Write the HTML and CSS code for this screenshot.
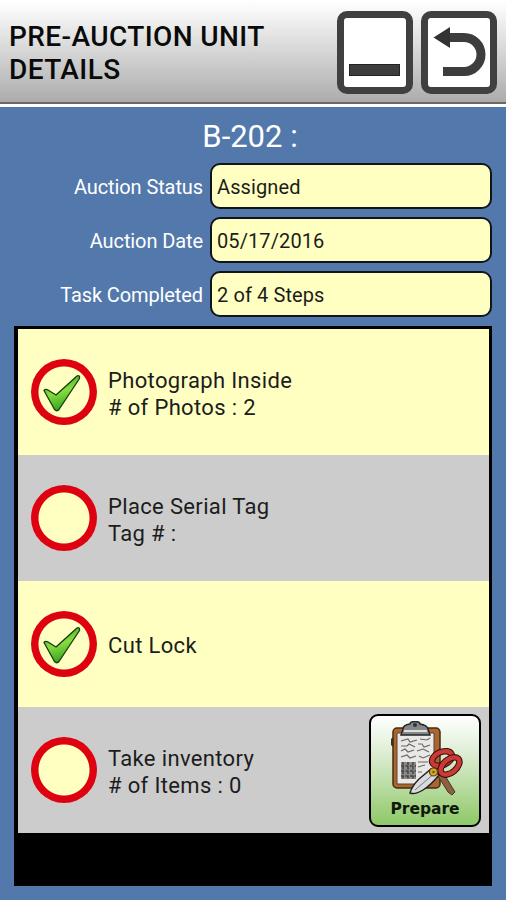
FILE: index.html
```html
<!DOCTYPE html>
<html lang="en">
<head>
    <meta charset="UTF-8">
    <meta name="viewport" content="width=device-width, initial-scale=1.0">
    <title>Pre-Auction Unit Details</title>
    <link rel="stylesheet" href="styles.css">
</head>
<body>
    <!-- Check mark shared by the completed steps -->
    <svg class="defs" width="0" height="0" aria-hidden="true">
        <defs>
            <linearGradient id="check-fill" x1="0" y1="0" x2="0.3" y2="1">
                <stop offset="0" stop-color="#3c9a22"/>
                <stop offset="0.55" stop-color="#86dc40"/>
                <stop offset="1" stop-color="#3aa51f"/>
            </linearGradient>
            <symbol id="check" viewBox="0 0 66 66">
                <path d="M13 31.500Q14.500 29.500 17 31L25 36L46 17Q49 15.500 48.500 19.500L28 50.500Q26 53 23.500 50.500Z" fill="url(#check-fill)" stroke="#123c0c" stroke-width="1.300" stroke-linejoin="round"/>
            </symbol>
        </defs>
    </svg>

    <header class="header">
        <h1>PRE-AUCTION UNIT DETAILS</h1>
        <div class="header-buttons">
            <button class="icon-btn" aria-label="Minimize">
                <svg width="62" height="70" viewBox="0 0 62 70">
                    <rect x="5.500" y="46.500" width="50" height="11" fill="#3d3d3d" stroke="#222" stroke-width="1"/>
                </svg>
            </button>
            <button class="icon-btn" aria-label="Back">
                <svg width="62" height="70" viewBox="0 0 62 70">
                    <path d="M20 19.500H36A17 17 0 0 1 36 53.500H15" fill="none" stroke="#3d3d3d" stroke-width="9"/>
                    <path d="M5.500 19.500L22 9V30Z" fill="#333"/>
                </svg>
            </button>
        </div>
    </header>

    <main class="content">
        <h2>B-202 :</h2>

        <div class="fields">
            <span class="label">Auction Status</span>
            <div class="value">Assigned</div>
            <span class="label">Auction Date</span>
            <div class="value">05/17/2016</div>
            <span class="label">Task Completed</span>
            <div class="value">2 of 4 Steps</div>
        </div>

        <div class="steps">
            <div class="step">
                <div class="circle"><svg width="66" height="66"><use href="#check"/></svg></div>
                <p>Photograph Inside<br># of Photos : 2</p>
            </div>
            <div class="step gray">
                <div class="circle"></div>
                <p>Place Serial Tag<br>Tag # :</p>
            </div>
            <div class="step">
                <div class="circle"><svg width="66" height="66"><use href="#check"/></svg></div>
                <p>Cut Lock</p>
            </div>
            <div class="step gray">
                <div class="circle"></div>
                <p>Take inventory<br># of Items : 0</p>
                <button class="prepare-btn">
                    <svg width="76" height="76" viewBox="-1 2 76 76">
                        <!-- clipboard -->
                        <path d="M5 18L3 20V26L5 28Z" fill="#333"/>
                        <rect x="5" y="9" width="47" height="60" rx="4" fill="#a9672f" stroke="#4a2a12" stroke-width="1.500"/>
                        <path d="M9 14H46V62L40 65H9Z" fill="#e9e8e6" stroke="#5b4330" stroke-width="1"/>
                        <path d="M15 10Q15 6 22 5Q22 2.500 27 2.500Q32 2.500 32 5Q39 6 40 10L42 16H13Z" fill="#85888a" stroke="#222" stroke-width="1.400"/>
                        <circle cx="27" cy="6" r="2" fill="#333"/>
                        <path d="M16 12H39" stroke="#ddd" stroke-width="2"/>
                        <!-- handwriting -->
                        <path d="M13 22L20 20L22 23L29 21M32 20L39 21L42 19M13 27H19L21 25L27 28M30 25H34L36 28L42 26M13 32L17 30L20 33L26 31M29 32L35 30L41 33M13 38L19 36L22 39L28 37M31 37L35 39L42 36M30 43H40M30 48L37 46M30 53H34" fill="none" stroke="#666" stroke-width="1.100"/>
                        <rect x="13" y="43" width="15" height="17" fill="#888"/>
                        <path d="M15 43V60M20 43V60M25 43V60M13 47H28M13 52H28M13 57H28" stroke="#444" stroke-width="1.500" stroke-dasharray="3 1.500"/>
                        <!-- scissors -->
                        <path d="M50 57L56 55L67 73L64 76L60 73Z" fill="#8d6042" stroke="#4a3426" stroke-width="1"/>
                        <path d="M43 50L51 56Q43 66 35 71Q27 76 22 74Q24 67 31 60Z" fill="#d9dbdc" stroke="#222" stroke-width="1.400"/>
                        <path d="M27 71L47 54" stroke="#777" stroke-width="1"/>
                        <ellipse cx="54" cy="39.500" rx="10.500" ry="6.500" transform="rotate(-24 54 39.500)" fill="none" stroke="#3a0d0a" stroke-width="6.500"/>
                        <ellipse cx="54" cy="39.500" rx="10.500" ry="6.500" transform="rotate(-24 54 39.500)" fill="none" stroke="#c93b34" stroke-width="4.400"/>
                        <ellipse cx="62" cy="47" rx="11" ry="6.500" transform="rotate(-40 62 47)" fill="none" stroke="#3a0d0a" stroke-width="6.500"/>
                        <ellipse cx="62" cy="47" rx="11" ry="6.500" transform="rotate(-40 62 47)" fill="none" stroke="#c93b34" stroke-width="4.400"/>
                        <circle cx="45.500" cy="53" r="4" fill="#d5a52a" stroke="#5a430c" stroke-width="1.200"/>
                        <circle cx="45.500" cy="53" r="1.200" fill="#6b520f"/>
                    </svg>
                    <span>Prepare</span>
                </button>
            </div>
        </div>
    </main>
</body>
</html>
```

FILE: styles.css
```css
* {
    box-sizing: border-box;
}

body {
    margin: 0;
    height: 900px;
    display: flex;
    flex-direction: column;
    font-family: Roboto, "Liberation Sans", sans-serif;
    background: #5378ab;
    color: #1c1c1c;
    overflow: hidden;
}

h1, h2, p {
    margin: 0;
}

button {
    font-family: inherit;
    padding: 0;
}

.defs {
    position: absolute;
}

.header {
    display: flex;
    justify-content: space-between;
    height: 107px;
    padding: 11px 9px 0 9px;
    background: linear-gradient(#ffffff 0, #fafafa 8px, #acacac 102px, #6d6767 102px, #6d6767 104px, #ffffff 104px);
}

h1 {
    width: 290px;
    padding-top: 9px;
    font-size: 28px;
    font-weight: 500;
    line-height: 33px;
    letter-spacing: 0.4px;
    color: #0a0a0a;
}

.header-buttons {
    display: flex;
    gap: 8px;
}

.icon-btn {
    width: 76px;
    height: 83px;
    background: #ffffff;
    border: 7px solid #404040;
    border-radius: 10px;
}

.icon-btn svg {
    display: block;
}

.content {
    flex: 1;
    padding: 0 14px;
}

h2 {
    height: 56px;
    padding-right: 6px;
    font-size: 31px;
    font-weight: 400;
    line-height: 60px;
    text-align: center;
    color: #ffffff;
}

.fields {
    display: grid;
    grid-template-columns: 189px 282px;
    column-gap: 7px;
    row-gap: 8px;
    align-items: center;
    font-size: 20px;
}

.label {
    padding-top: 2px;
    text-align: right;
    letter-spacing: -0.1px;
    color: #ffffff;
}

.value {
    height: 46px;
    padding-left: 5px;
    line-height: 45px;
    letter-spacing: 0.1px;
    background: #ffffc2;
    border: 2px solid #10151c;
    border-radius: 10px;
}

.steps {
    height: 560px;
    margin-top: 9px;
    padding: 3px 3px 0 4px;
    background: #000000;
}

.step {
    display: flex;
    align-items: center;
    height: 126px;
    padding-left: 13px;
    background: #ffffc2;
}

.step.gray {
    background: #cccccc;
}

.circle {
    width: 66px;
    height: 66px;
    border-radius: 50%;
    background: radial-gradient(circle, #ffffc2 25px, #de0210 26px);
}

.circle svg {
    display: block;
}

.step p {
    flex: 1;
    padding: 3px 0 0 11px;
    font-size: 22px;
    line-height: 27px;
    letter-spacing: 0.35px;
}

.prepare-btn {
    display: flex;
    flex-direction: column;
    align-items: center;
    width: 112px;
    height: 113px;
    margin-right: 8px;
    padding-top: 5px;
    background: linear-gradient(#ffffff, #dcedd2 35%, #8fc868);
    border: 2px solid #000000;
    border-radius: 9px;
}

.prepare-btn span {
    margin-top: 2px;
    font-family: "DejaVu Sans", sans-serif;
    font-size: 15.5px;
    font-weight: bold;
    line-height: 20px;
    color: #0f1a0c;
}
```
